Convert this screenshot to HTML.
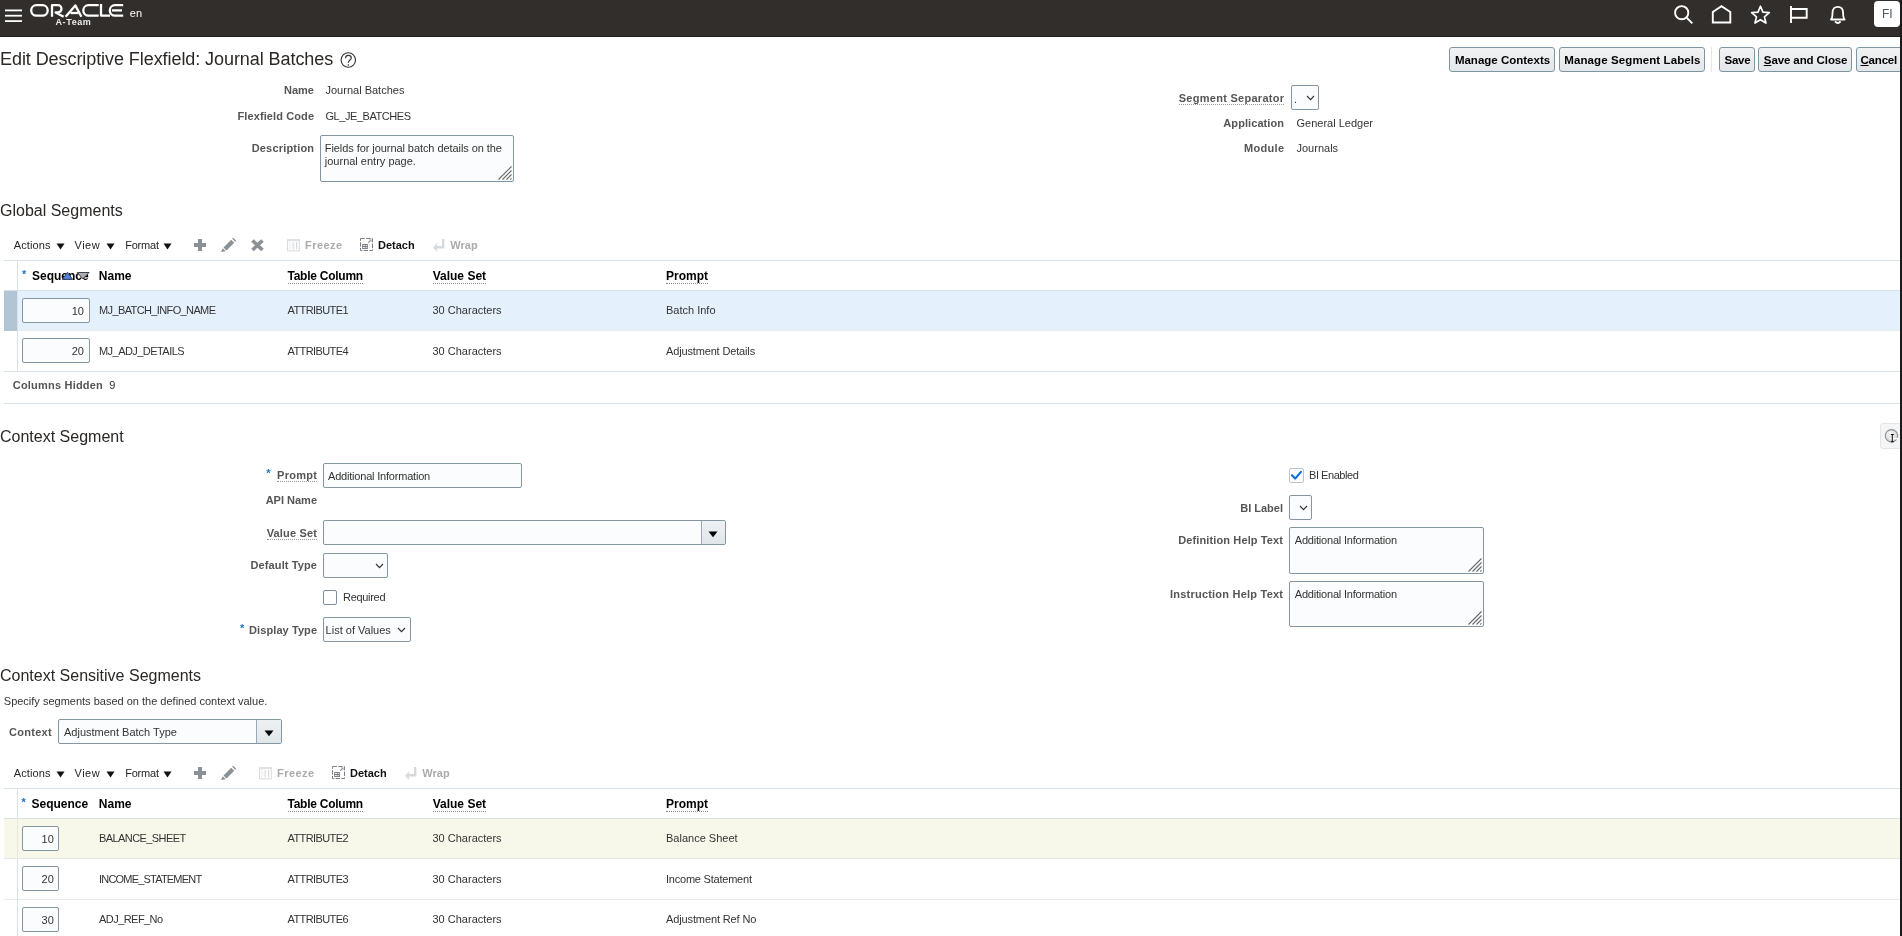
<!DOCTYPE html><html><head><meta charset="utf-8"><style>
html,body{margin:0;padding:0;}
body{width:1902px;height:936px;overflow:hidden;position:relative;background:#fff;font-family:'Liberation Sans', sans-serif;}
#pg{position:absolute;left:0;top:0;width:1902px;height:936px;will-change:transform;background:#fff;}
.t{position:absolute;white-space:nowrap;}
.r{position:absolute;box-sizing:border-box;}
.inp{position:absolute;box-sizing:border-box;border:1px solid #8396a2;background:#fbfcfd;border-radius:2px;}
.btn{position:absolute;box-sizing:border-box;border:1px solid #7e95a4;border-radius:3px;background:linear-gradient(#f1f2f4,#e3e7ea);}
.dot{border-bottom:1px dotted #999;}
</style></head><body><div id="pg">
<div class="r" style="left:0px;top:0px;width:1902px;height:36px;background:#322e2b;"></div>
<div class="r" style="left:0px;top:36px;width:1902px;height:1px;background:#231f1c;"></div>
<svg class="r" style="left:4px;top:8px;" width="20" height="16" viewBox="0 0 20 16"><rect x="1" y="1.5" width="17" height="1.8" fill="#fff"/><rect x="1" y="6.8" width="17" height="1.8" fill="#fff"/><rect x="1" y="12.2" width="17" height="1.8" fill="#fff"/></svg>
<svg class="r" style="left:28px;top:2px;" width="100" height="26" viewBox="0 0 100 26"><g fill="none" stroke="#fff" stroke-width="2.3" stroke-linejoin="round">
<rect x="3.2" y="3.2" width="16.5" height="10.4" rx="5.2"/>
<path d="M24,14.8 V3.2 H29.9 A3.6,3.6 0 0 1 29.9,10.4 H27.6 L35.6,14.8"/>
<path d="M37.6,14.8 L47.3,3.4 L53.4,14.8"/><path d="M42.5,11 H50.5"/>
<path d="M70.7,3.2 H60.5 A5.2,5.2 0 0 0 60.5,13.6 H70.7"/>
<path d="M73,2.1 V13.6 H82"/>
<path d="M95.2,3.2 H87 A5.2,5.2 0 0 0 87,13.6 H95.2"/><path d="M84,8.4 H94"/>
</g></svg>
<div class="t" style="left:55.5px;top:16.6px;font-size:9px;line-height:10px;font-weight:bold;letter-spacing:0.6px;color:#eee;">A-Team</div>
<div class="t" style="left:129.8px;top:5.7px;font-size:11px;line-height:14px;color:#fff;">en</div>
<svg class="r" style="left:1670px;top:2px;" width="28" height="26" viewBox="0 0 28 26"><g fill="none" stroke="#fff" stroke-width="1.9"><circle cx="11.7" cy="10.7" r="6.6"/><path d="M16.5,15.5 L22.3,21.3"/></g></svg>
<svg class="r" style="left:1708px;top:2px;" width="28" height="26" viewBox="0 0 28 26"><path d="M4.8,20.5 V10 L13.5,4.2 L22.3,10 V20.5 Z" fill="none" stroke="#fff" stroke-width="1.9"/></svg>
<svg class="r" style="left:1746px;top:2px;" width="28" height="26" viewBox="0 0 28 26"><path d="M14.45,4.25 L16.91,10.16 L23.29,10.68 L18.43,14.84 L19.92,21.07 L14.45,17.73 L8.98,21.07 L10.47,14.84 L5.61,10.68 L11.99,10.16 Z" fill="none" stroke="#fff" stroke-width="1.7" stroke-linejoin="round"/></svg>
<svg class="r" style="left:1786px;top:2px;" width="28" height="26" viewBox="0 0 28 26"><g fill="none" stroke="#fff" stroke-width="1.9"><path d="M5,4 V21"/><path d="M5,7 H20.7 V15.7 H5"/></g></svg>
<svg class="r" style="left:1825px;top:2px;" width="28" height="26" viewBox="0 0 28 26"><g fill="none" stroke="#fff" stroke-width="1.8"><path d="M6,17.5 C7.5,16 7.5,14 7.5,11 C7.5,6.5 10,4.8 12.8,4.8 C15.6,4.8 18.1,6.5 18.1,11 C18.1,14 18.1,16 19.6,17.5 Z" stroke-linejoin="round"/><path d="M10,19.4 Q12.8,22.6 15.6,19.4"/></g></svg>
<div class="r" style="left:1874px;top:1px;width:26px;height:26px;background:#fdfeff;border-radius:4px;"></div>
<div class="t" style="left:1874.3px;width:26px;text-align:center;top:6.5px;font-size:12px;line-height:14px;color:#555;">FI</div>
<div class="t" style="top:48.9px;font-size:18px;line-height:20px;color:#2b2724;letter-spacing:-0.07px;left:0.0px;">Edit Descriptive Flexfield: Journal Batches</div>
<svg class="r" style="left:339px;top:51px;" width="18" height="18" viewBox="0 0 18 18"><circle cx="9.3" cy="9" r="7.2" fill="none" stroke="#333" stroke-width="1.1"/><path d="M6.4,7.2 C6.6,5.3 7.9,4.4 9.4,4.4 C11.1,4.4 12.3,5.5 12.3,6.9 C12.3,8.8 9.3,9.3 9.3,11.8 M9.3,13.3 V14.8" fill="none" stroke="#333" stroke-width="1.15"/></svg>
<div class="btn" style="left:1449px;top:47px;width:106px;height:25px;"></div>
<div class="t" style="left:1454.9px;top:53px;font-size:11.5px;line-height:14px;font-weight:bold;color:#000;letter-spacing:0px">Manage Contexts</div>
<div class="btn" style="left:1559px;top:47px;width:146px;height:25px;"></div>
<div class="t" style="left:1564.3px;top:53px;font-size:11.5px;line-height:14px;font-weight:bold;color:#000;letter-spacing:0.1px">Manage Segment Labels</div>
<div class="r" style="left:1711px;top:47px;width:1px;height:25px;background:#dfe6ec;"></div>
<div class="btn" style="left:1719px;top:47px;width:36px;height:25px;"></div>
<div class="t" style="left:1724.6px;top:53px;font-size:11.5px;line-height:14px;font-weight:bold;color:#000;letter-spacing:-0.3px">Save</div>
<div class="btn" style="left:1758px;top:47px;width:94px;height:25px;"></div>
<div class="t" style="left:1763.8px;top:53px;font-size:11.5px;line-height:14px;font-weight:bold;color:#000;letter-spacing:-0.1px"><u style="text-decoration-thickness:1px;text-underline-offset:1px">S</u>ave and Close</div>
<div class="btn" style="left:1856px;top:47px;width:50px;height:25px;"></div>
<div class="t" style="left:1860.5px;top:53px;font-size:11.5px;line-height:14px;font-weight:bold;color:#000;letter-spacing:-0.2px"><u style="text-decoration-thickness:1px;text-underline-offset:1px">C</u>ancel</div>
<div class="t" style="top:83.0px;font-size:11px;line-height:14px;color:#555555;font-weight:bold;right:1588.0px;text-align:right;">Name</div>
<div class="t" style="top:83.0px;font-size:11px;line-height:14px;color:#333;left:325.5px;">Journal Batches</div>
<div class="t" style="top:109.0px;font-size:11px;line-height:14px;color:#555555;font-weight:bold;letter-spacing:0.1px;right:1587.9px;text-align:right;">Flexfield Code</div>
<div class="t" style="top:109.0px;font-size:11px;line-height:14px;color:#333;letter-spacing:-0.45px;left:325.5px;">GL_JE_BATCHES</div>
<div class="t" style="top:141.2px;font-size:11px;line-height:14px;color:#555555;font-weight:bold;letter-spacing:0.18px;right:1587.8px;text-align:right;">Description</div>
<div class="inp" style="left:320px;top:135px;width:194px;height:47px;"></div>
<div class="t" style="top:141.2px;font-size:11px;line-height:14px;color:#333;letter-spacing:-0.07px;left:324.8px;">Fields for journal batch details on the</div>
<div class="t" style="top:153.7px;font-size:11px;line-height:14px;color:#333;left:324.8px;">journal entry page.</div>
<svg class="r" style="left:497px;top:165px;" width="16" height="16" viewBox="0 0 16 16"><g stroke="#6a6a6a" stroke-width="1.1"><path d="M1.5,14.5 L14.5,1.5"/><path d="M5.5,14.5 L14.5,5.5"/><path d="M9.5,14.5 L14.5,9.5"/><path d="M13.3,14.5 L14.5,13.3"/></g></svg>
<div class="t" style="top:91.0px;font-size:11px;line-height:14px;color:#555555;font-weight:bold;letter-spacing:0.28px;right:617.7px;text-align:right;"><span class="dot">Segment Separator</span></div>
<div class="inp" style="left:1291px;top:85px;width:28px;height:25px;"></div>
<svg class="r" style="left:1305.5px;top:94.5px;" width="9" height="6" viewBox="0 0 9 6"><path d="M1,1 L4.5,4.6 L8,1" fill="none" stroke="#333" stroke-width="1.15"/></svg>
<div class="t" style="top:92.0px;font-size:11px;line-height:14px;color:#333;left:1294.0px;">.</div>
<div class="t" style="top:115.8px;font-size:11px;line-height:14px;color:#555555;font-weight:bold;letter-spacing:0.08px;right:617.9px;text-align:right;">Application</div>
<div class="t" style="top:115.8px;font-size:11px;line-height:14px;color:#333;left:1296.5px;">General Ledger</div>
<div class="t" style="top:140.7px;font-size:11px;line-height:14px;color:#555555;font-weight:bold;letter-spacing:0.3px;right:617.7px;text-align:right;">Module</div>
<div class="t" style="top:140.7px;font-size:11px;line-height:14px;color:#333;left:1296.5px;">Journals</div>
<div class="t" style="top:200.6px;font-size:16px;line-height:20px;color:#2b2724;left:0.0px;">Global Segments</div>
<div class="t" style="top:238.2px;font-size:11px;line-height:14px;color:#252525;letter-spacing:0.12px;left:13.7px;">Actions</div>
<svg class="r" style="left:55.5px;top:242.5px;" width="9" height="7" viewBox="0 0 9 7"><path d="M0.5,0.5 H8.5 L4.5,6.5 Z" fill="#111"/></svg>
<div class="t" style="top:238.2px;font-size:11px;line-height:14px;color:#252525;letter-spacing:0.45px;left:74.6px;">View</div>
<svg class="r" style="left:106.2px;top:242.5px;" width="9" height="7" viewBox="0 0 9 7"><path d="M0.5,0.5 H8.5 L4.5,6.5 Z" fill="#111"/></svg>
<div class="t" style="top:238.2px;font-size:11px;line-height:14px;color:#252525;letter-spacing:-0.2px;left:125.2px;">Format</div>
<svg class="r" style="left:163.2px;top:242.5px;" width="9" height="7" viewBox="0 0 9 7"><path d="M0.5,0.5 H8.5 L4.5,6.5 Z" fill="#111"/></svg>
<svg class="r" style="left:193px;top:238.0px;" width="14" height="14" viewBox="0 0 14 14"><path d="M5,1 H9 V5 H13 V9 H9 V13 H5 V9 H1 V5 H5 Z" fill="#8a9096"/></svg>
<svg class="r" style="left:220px;top:237.0px;" width="17" height="16" viewBox="0 0 17 16"><g fill="#8a9096"><path d="M3.5,10.5 L11.2,2.8 L14.2,5.8 L6.5,13.5 Z"/><path d="M12.2,1.8 L13.2,0.8 L16.2,3.8 L15.2,4.8 Z"/><path d="M2.8,11.2 L5.8,14.2 L1,15 Z"/></g></svg>
<svg class="r" style="left:250px;top:238.0px;" width="15" height="14" viewBox="0 0 15 14"><path d="M2.5,2.5 L12.5,12 M12.5,2.5 L2.5,12" stroke="#8a9096" stroke-width="3.6"/></svg>
<svg class="r" style="left:286px;top:238.0px;" width="15" height="14" viewBox="0 0 15 14"><rect x="1.5" y="1.5" width="11.8" height="11.3" fill="none" stroke="#d8dbde" stroke-width="1"/><rect x="1" y="1" width="12.8" height="2.2" fill="#dfe2e5"/><g fill="#dcdfe2"><rect x="3" y="4.3" width="1" height="1"/><rect x="4.2" y="5.8" width="1" height="1"/><rect x="3" y="7.3" width="1" height="1"/><rect x="4.2" y="8.8" width="1" height="1"/><rect x="3" y="10.3" width="1" height="1"/></g><rect x="6.3" y="4.2" width="1.9" height="7" fill="#e5e7e9"/><rect x="10.1" y="4.2" width="1.1" height="7" fill="#d3d6d9"/></svg>
<div class="t" style="top:238.2px;font-size:11px;line-height:14px;color:#ababab;font-weight:bold;letter-spacing:0.45px;left:305.0px;">Freeze</div>
<svg class="r" style="left:359px;top:237.0px;" width="16" height="16" viewBox="0 0 16 16"><rect x="1.5" y="1.5" width="12" height="12" fill="none" stroke="#7b8086" stroke-width="1" stroke-dasharray="4.4,1.3"/><rect x="3" y="7" width="6" height="5" rx="0.8" fill="#7b8086"/><g fill="#fff"><rect x="3.7" y="8.1" width="2.7" height="0.8"/><rect x="7.1" y="8.1" width="1.2" height="0.8"/><rect x="3.7" y="10" width="2.7" height="0.8"/><rect x="7.1" y="10" width="1.2" height="0.8"/></g><path d="M9.3,5.7 L11.2,3.8" stroke="#8a8f95" stroke-width="1.2"/><path d="M10,2.6 L12.5,2.6 L12.5,5.1 Z" fill="#8a8f95"/></svg>
<div class="t" style="top:238.2px;font-size:11px;line-height:14px;color:#111;font-weight:bold;left:378.0px;">Detach</div>
<svg class="r" style="left:432px;top:238.0px;" width="14" height="14" viewBox="0 0 14 14"><path d="M11.2,1 V9.2 H4" fill="none" stroke="#d6d9dc" stroke-width="2.4"/><path d="M0.8,9.8 L5.2,5 V14 Z" fill="#dadde0"/></svg>
<div class="t" style="top:238.2px;font-size:11px;line-height:14px;color:#ababab;font-weight:bold;left:450.3px;">Wrap</div>
<div class="r" style="left:4px;top:260px;width:1896px;height:1px;background:#d9e1e8;"></div>
<div class="r" style="left:17px;top:261px;width:1px;height:110px;background:#d9e1e8;"></div>
<div class="t" style="top:266.5px;font-size:11px;line-height:14px;color:#1c74c8;font-weight:bold;left:22.0px;">*</div>
<div class="t" style="top:268.6px;font-size:12px;line-height:14px;color:#000;font-weight:bold;left:32.0px;">Sequence</div>
<svg class="r" style="left:60px;top:270px;" width="32" height="12" viewBox="0 0 32 12"><path d="M2.4,9.4 L7.4,2.3 L12.7,9.4 Z" fill="#4f84d8" stroke="#2a3a55" stroke-width="0.9"/><path d="M17.3,2.5 H29.1 L22.8,8.9 Z" fill="#aab0b5" stroke="#333" stroke-width="0.9"/></svg>
<div class="t" style="top:269.0px;font-size:12px;line-height:14px;color:#000;font-weight:bold;left:98.8px;">Name</div>
<div class="t" style="top:269.0px;font-size:12px;line-height:14px;color:#000;font-weight:bold;letter-spacing:-0.25px;left:287.5px;"><span class="dot" style="border-bottom-color:#8a8a8a">Table Column</span></div>
<div class="t" style="top:269.0px;font-size:12px;line-height:14px;color:#000;font-weight:bold;left:432.7px;"><span class="dot" style="border-bottom-color:#8a8a8a">Value Set</span></div>
<div class="t" style="top:269.0px;font-size:12px;line-height:14px;color:#000;font-weight:bold;left:666.0px;"><span class="dot" style="border-bottom-color:#8a8a8a">Prompt</span></div>
<div class="r" style="left:4px;top:290px;width:1896px;height:1px;background:#d9e1e8;"></div>
<div class="r" style="left:18px;top:291px;width:1882px;height:40px;background:#e4f0fc;"></div>
<div class="r" style="left:4px;top:291px;width:13px;height:40px;background:#b2c5d5;"></div>
<div class="r" style="left:18px;top:330px;width:1882px;height:1px;background:#eaecee;"></div>
<div class="inp" style="left:22px;top:298px;width:68px;height:25px;"></div>
<div class="t" style="top:304.0px;font-size:11px;line-height:14px;color:#333;right:1818.0px;text-align:right;">10</div>
<div class="t" style="top:303.2px;font-size:11px;line-height:14px;color:#333;letter-spacing:-0.62px;left:99.0px;">MJ_BATCH_INFO_NAME</div>
<div class="t" style="top:303.2px;font-size:11px;line-height:14px;color:#333;letter-spacing:-0.6px;left:287.5px;">ATTRIBUTE1</div>
<div class="t" style="top:303.2px;font-size:11px;line-height:14px;color:#333;left:432.5px;">30 Characters</div>
<div class="t" style="top:303.2px;font-size:11px;line-height:14px;color:#333;left:666.0px;">Batch Info</div>
<div class="inp" style="left:22px;top:338px;width:68px;height:25px;"></div>
<div class="t" style="top:344.0px;font-size:11px;line-height:14px;color:#333;right:1818.0px;text-align:right;">20</div>
<div class="t" style="top:343.5px;font-size:11px;line-height:14px;color:#333;letter-spacing:-0.55px;left:99.0px;">MJ_ADJ_DETAILS</div>
<div class="t" style="top:343.5px;font-size:11px;line-height:14px;color:#333;letter-spacing:-0.6px;left:287.5px;">ATTRIBUTE4</div>
<div class="t" style="top:343.5px;font-size:11px;line-height:14px;color:#333;left:432.5px;">30 Characters</div>
<div class="t" style="top:343.5px;font-size:11px;line-height:14px;color:#333;letter-spacing:-0.15px;left:666.0px;">Adjustment Details</div>
<div class="r" style="left:4px;top:371px;width:1896px;height:1px;background:#d9e1e8;"></div>
<div class="t" style="top:378.2px;font-size:11px;line-height:14px;color:#555555;font-weight:bold;letter-spacing:0.2px;left:12.8px;">Columns Hidden</div>
<div class="t" style="top:378.2px;font-size:11px;line-height:14px;color:#333;left:109.3px;">9</div>
<div class="r" style="left:4px;top:403px;width:1896px;height:1px;background:#d9e1e8;"></div>
<div class="t" style="top:426.7px;font-size:16px;line-height:20px;color:#2b2724;left:0.0px;">Context Segment</div>
<div class="r" style="left:1880px;top:423px;width:22px;height:26px;background:#f3f5f7;border:1px solid #dfe5ea;border-radius:3px;"></div>
<svg class="r" style="left:1884px;top:428px;" width="16" height="16" viewBox="0 0 16 16"><defs><radialGradient id="cg" cx="0.4" cy="0.35" r="0.7"><stop offset="0" stop-color="#fafafa"/><stop offset="1" stop-color="#cfcfcf"/></radialGradient></defs><circle cx="7.5" cy="7.8" r="6.2" fill="url(#cg)" stroke="#8f8f8f" stroke-width="1.1"/><path d="M5.5,10.6 H14" stroke="#fff" stroke-width="1.6"/><path d="M8.3,6.5 V13.8 M6.8,6.5 H9.8 M6.8,13.8 H9.8" stroke="#111" stroke-width="1"/></svg>
<div class="t" style="top:465.5px;font-size:11px;line-height:14px;color:#1c74c8;font-weight:bold;left:266.2px;">*</div>
<div class="t" style="top:468.1px;font-size:11px;line-height:14px;color:#555555;font-weight:bold;letter-spacing:0.3px;right:1584.7px;text-align:right;"><span class="dot">Prompt</span></div>
<div class="inp" style="left:323px;top:463px;width:199px;height:25px;"></div>
<div class="t" style="top:469.3px;font-size:11px;line-height:14px;color:#333;letter-spacing:-0.2px;left:328.0px;">Additional Information</div>
<div class="t" style="top:492.9px;font-size:11px;line-height:14px;color:#555555;font-weight:bold;right:1585.0px;text-align:right;">API Name</div>
<div class="t" style="top:525.8px;font-size:11px;line-height:14px;color:#555555;font-weight:bold;letter-spacing:0.18px;right:1584.8px;text-align:right;"><span class="dot">Value Set</span></div>
<div class="inp" style="left:323px;top:520px;width:403px;height:25px;"></div>
<div class="r" style="left:701px;top:521px;width:24px;height:23px;background:linear-gradient(#eef1f3,#e1e6ea);border-left:1px solid #9aaabb;"></div>
<svg class="r" style="left:708px;top:531px;" width="10" height="7" viewBox="0 0 10 7"><path d="M0.5,0.5 H9.5 L5,6.2 Z" fill="#000"/></svg>
<div class="t" style="top:558.4px;font-size:11px;line-height:14px;color:#555555;font-weight:bold;letter-spacing:0.12px;right:1584.9px;text-align:right;">Default Type</div>
<div class="inp" style="left:323px;top:553px;width:65px;height:25px;"></div>
<svg class="r" style="left:374.5px;top:562.5px;" width="9" height="6" viewBox="0 0 9 6"><path d="M1,1 L4.5,4.6 L8,1" fill="none" stroke="#333" stroke-width="1.15"/></svg>
<div class="r" style="left:323px;top:590px;width:14px;height:15px;border:1px solid #7d8fa1;border-radius:2px;background:#fff;"></div>
<div class="t" style="top:589.8px;font-size:11px;line-height:14px;color:#333;letter-spacing:-0.3px;left:343.0px;">Required</div>
<div class="t" style="top:620.5px;font-size:11px;line-height:14px;color:#1c74c8;font-weight:bold;left:240.0px;">*</div>
<div class="t" style="top:623.3px;font-size:11px;line-height:14px;color:#555555;font-weight:bold;letter-spacing:0.08px;right:1584.9px;text-align:right;">Display Type</div>
<div class="inp" style="left:323px;top:617px;width:88px;height:25px;"></div>
<svg class="r" style="left:397.1px;top:626.5px;" width="9" height="6" viewBox="0 0 9 6"><path d="M1,1 L4.5,4.6 L8,1" fill="none" stroke="#333" stroke-width="1.15"/></svg>
<div class="t" style="top:623.3px;font-size:11px;line-height:14px;color:#333;left:325.6px;">List of Values</div>
<div class="r" style="left:1289px;top:468px;width:15px;height:15px;border:1px solid #b9c5d0;border-radius:2px;background:#fff;"></div>
<svg class="r" style="left:1289px;top:468px;" width="15" height="15" viewBox="0 0 15 15"><path d="M3,7.2 L6.2,10.6 L12,3.9" fill="none" stroke="#0a6fd6" stroke-width="2.1" stroke-linecap="round" stroke-linejoin="round"/></svg>
<div class="t" style="top:468.2px;font-size:11px;line-height:14px;color:#333;letter-spacing:-0.45px;left:1309.0px;">BI Enabled</div>
<div class="t" style="top:500.9px;font-size:11px;line-height:14px;color:#555555;font-weight:bold;right:619.0px;text-align:right;">BI Label</div>
<div class="inp" style="left:1289px;top:495px;width:23px;height:25px;"></div>
<svg class="r" style="left:1298.5px;top:504.5px;" width="9" height="6" viewBox="0 0 9 6"><path d="M1,1 L4.5,4.6 L8,1" fill="none" stroke="#333" stroke-width="1.15"/></svg>
<div class="t" style="top:533.0px;font-size:11px;line-height:14px;color:#555555;font-weight:bold;letter-spacing:0.12px;right:618.9px;text-align:right;">Definition Help Text</div>
<div class="inp" style="left:1289px;top:527px;width:195px;height:47px;"></div>
<div class="t" style="top:533.0px;font-size:11px;line-height:14px;color:#333;letter-spacing:-0.2px;left:1294.8px;">Additional Information</div>
<svg class="r" style="left:1467px;top:557px;" width="16" height="16" viewBox="0 0 16 16"><g stroke="#6a6a6a" stroke-width="1.1"><path d="M1.5,14.5 L14.5,1.5"/><path d="M5.5,14.5 L14.5,5.5"/><path d="M9.5,14.5 L14.5,9.5"/><path d="M13.3,14.5 L14.5,13.3"/></g></svg>
<div class="t" style="top:586.9px;font-size:11px;line-height:14px;color:#555555;font-weight:bold;letter-spacing:0.22px;right:618.8px;text-align:right;">Instruction Help Text</div>
<div class="inp" style="left:1289px;top:581px;width:195px;height:46px;"></div>
<div class="t" style="top:586.9px;font-size:11px;line-height:14px;color:#333;letter-spacing:-0.2px;left:1294.8px;">Additional Information</div>
<svg class="r" style="left:1467px;top:610px;" width="16" height="16" viewBox="0 0 16 16"><g stroke="#6a6a6a" stroke-width="1.1"><path d="M1.5,14.5 L14.5,1.5"/><path d="M5.5,14.5 L14.5,5.5"/><path d="M9.5,14.5 L14.5,9.5"/><path d="M13.3,14.5 L14.5,13.3"/></g></svg>
<div class="t" style="top:665.8px;font-size:16px;line-height:20px;color:#2b2724;left:0.0px;">Context Sensitive Segments</div>
<div class="t" style="top:694.0px;font-size:11px;line-height:14px;color:#333;left:3.8px;">Specify segments based on the defined context value.</div>
<div class="t" style="top:725.0px;font-size:11px;line-height:14px;color:#555555;font-weight:bold;letter-spacing:0.3px;right:1850.0px;text-align:right;">Context</div>
<div class="inp" style="left:58px;top:719px;width:224px;height:25px;"></div>
<div class="r" style="left:256px;top:720px;width:25px;height:23px;background:linear-gradient(#eef1f3,#e1e6ea);border-left:1px solid #9aaabb;"></div>
<svg class="r" style="left:264px;top:730px;" width="10" height="7" viewBox="0 0 10 7"><path d="M0.5,0.5 H9.5 L5,6.2 Z" fill="#000"/></svg>
<div class="t" style="top:725.2px;font-size:11px;line-height:14px;color:#333;left:64.0px;">Adjustment Batch Type</div>
<div class="t" style="top:766.3px;font-size:11px;line-height:14px;color:#252525;letter-spacing:0.12px;left:13.7px;">Actions</div>
<svg class="r" style="left:55.5px;top:770.5999999999999px;" width="9" height="7" viewBox="0 0 9 7"><path d="M0.5,0.5 H8.5 L4.5,6.5 Z" fill="#111"/></svg>
<div class="t" style="top:766.3px;font-size:11px;line-height:14px;color:#252525;letter-spacing:0.45px;left:74.6px;">View</div>
<svg class="r" style="left:106.2px;top:770.5999999999999px;" width="9" height="7" viewBox="0 0 9 7"><path d="M0.5,0.5 H8.5 L4.5,6.5 Z" fill="#111"/></svg>
<div class="t" style="top:766.3px;font-size:11px;line-height:14px;color:#252525;letter-spacing:-0.2px;left:125.2px;">Format</div>
<svg class="r" style="left:163.2px;top:770.5999999999999px;" width="9" height="7" viewBox="0 0 9 7"><path d="M0.5,0.5 H8.5 L4.5,6.5 Z" fill="#111"/></svg>
<svg class="r" style="left:193px;top:766.0999999999999px;" width="14" height="14" viewBox="0 0 14 14"><path d="M5,1 H9 V5 H13 V9 H9 V13 H5 V9 H1 V5 H5 Z" fill="#8a9096"/></svg>
<svg class="r" style="left:220px;top:765.0999999999999px;" width="17" height="16" viewBox="0 0 17 16"><g fill="#8a9096"><path d="M3.5,10.5 L11.2,2.8 L14.2,5.8 L6.5,13.5 Z"/><path d="M12.2,1.8 L13.2,0.8 L16.2,3.8 L15.2,4.8 Z"/><path d="M2.8,11.2 L5.8,14.2 L1,15 Z"/></g></svg>
<svg class="r" style="left:258px;top:766.0999999999999px;" width="15" height="14" viewBox="0 0 15 14"><rect x="1.5" y="1.5" width="11.8" height="11.3" fill="none" stroke="#d8dbde" stroke-width="1"/><rect x="1" y="1" width="12.8" height="2.2" fill="#dfe2e5"/><g fill="#dcdfe2"><rect x="3" y="4.3" width="1" height="1"/><rect x="4.2" y="5.8" width="1" height="1"/><rect x="3" y="7.3" width="1" height="1"/><rect x="4.2" y="8.8" width="1" height="1"/><rect x="3" y="10.3" width="1" height="1"/></g><rect x="6.3" y="4.2" width="1.9" height="7" fill="#e5e7e9"/><rect x="10.1" y="4.2" width="1.1" height="7" fill="#d3d6d9"/></svg>
<div class="t" style="top:766.3px;font-size:11px;line-height:14px;color:#ababab;font-weight:bold;letter-spacing:0.45px;left:277.0px;">Freeze</div>
<svg class="r" style="left:331px;top:765.0999999999999px;" width="16" height="16" viewBox="0 0 16 16"><rect x="1.5" y="1.5" width="12" height="12" fill="none" stroke="#7b8086" stroke-width="1" stroke-dasharray="4.4,1.3"/><rect x="3" y="7" width="6" height="5" rx="0.8" fill="#7b8086"/><g fill="#fff"><rect x="3.7" y="8.1" width="2.7" height="0.8"/><rect x="7.1" y="8.1" width="1.2" height="0.8"/><rect x="3.7" y="10" width="2.7" height="0.8"/><rect x="7.1" y="10" width="1.2" height="0.8"/></g><path d="M9.3,5.7 L11.2,3.8" stroke="#8a8f95" stroke-width="1.2"/><path d="M10,2.6 L12.5,2.6 L12.5,5.1 Z" fill="#8a8f95"/></svg>
<div class="t" style="top:766.3px;font-size:11px;line-height:14px;color:#111;font-weight:bold;left:350.0px;">Detach</div>
<svg class="r" style="left:404px;top:766.0999999999999px;" width="14" height="14" viewBox="0 0 14 14"><path d="M11.2,1 V9.2 H4" fill="none" stroke="#d6d9dc" stroke-width="2.4"/><path d="M0.8,9.8 L5.2,5 V14 Z" fill="#dadde0"/></svg>
<div class="t" style="top:766.3px;font-size:11px;line-height:14px;color:#ababab;font-weight:bold;left:422.3px;">Wrap</div>
<div class="r" style="left:4px;top:788px;width:1896px;height:1px;background:#d9e1e8;"></div>
<div class="r" style="left:17px;top:789px;width:1px;height:147px;background:#d9e1e8;"></div>
<div class="t" style="top:794.5px;font-size:11px;line-height:14px;color:#1c74c8;font-weight:bold;left:21.5px;">*</div>
<div class="t" style="top:796.6px;font-size:12px;line-height:14px;color:#000;font-weight:bold;left:31.5px;">Sequence</div>
<div class="t" style="top:796.6px;font-size:12px;line-height:14px;color:#000;font-weight:bold;left:98.8px;">Name</div>
<div class="t" style="top:796.6px;font-size:12px;line-height:14px;color:#000;font-weight:bold;letter-spacing:-0.25px;left:287.5px;"><span class="dot" style="border-bottom-color:#8a8a8a">Table Column</span></div>
<div class="t" style="top:796.6px;font-size:12px;line-height:14px;color:#000;font-weight:bold;left:432.7px;"><span class="dot" style="border-bottom-color:#8a8a8a">Value Set</span></div>
<div class="t" style="top:796.6px;font-size:12px;line-height:14px;color:#000;font-weight:bold;left:666.0px;"><span class="dot" style="border-bottom-color:#8a8a8a">Prompt</span></div>
<div class="r" style="left:4px;top:818px;width:1896px;height:1px;background:#d9e1e8;"></div>
<div class="r" style="left:4px;top:819px;width:1896px;height:39px;background:#f7f8e9;"></div>
<div class="r" style="left:17px;top:819px;width:1px;height:39px;background:#e6e9dc;"></div>
<div class="inp" style="left:22px;top:826px;width:37px;height:25px;"></div>
<div class="t" style="top:832.0px;font-size:11px;line-height:14px;color:#333;right:1848.2px;text-align:right;">10</div>
<div class="t" style="top:830.9px;font-size:11px;line-height:14px;color:#333;letter-spacing:-0.58px;left:99.0px;">BALANCE_SHEET</div>
<div class="t" style="top:830.9px;font-size:11px;line-height:14px;color:#333;letter-spacing:-0.6px;left:287.5px;">ATTRIBUTE2</div>
<div class="t" style="top:830.9px;font-size:11px;line-height:14px;color:#333;left:432.5px;">30 Characters</div>
<div class="t" style="top:830.9px;font-size:11px;line-height:14px;color:#333;left:666.0px;">Balance Sheet</div>
<div class="r" style="left:4px;top:858px;width:1896px;height:1px;background:#e5e7e9;"></div>
<div class="inp" style="left:22px;top:866px;width:37px;height:25px;"></div>
<div class="t" style="top:872.0px;font-size:11px;line-height:14px;color:#333;right:1848.2px;text-align:right;">20</div>
<div class="t" style="top:871.6px;font-size:11px;line-height:14px;color:#333;letter-spacing:-0.8px;left:99.0px;">INCOME_STATEMENT</div>
<div class="t" style="top:871.6px;font-size:11px;line-height:14px;color:#333;letter-spacing:-0.6px;left:287.5px;">ATTRIBUTE3</div>
<div class="t" style="top:871.6px;font-size:11px;line-height:14px;color:#333;left:432.5px;">30 Characters</div>
<div class="t" style="top:871.6px;font-size:11px;line-height:14px;color:#333;letter-spacing:-0.22px;left:666.0px;">Income Statement</div>
<div class="r" style="left:4px;top:899px;width:1896px;height:1px;background:#e5e7e9;"></div>
<div class="inp" style="left:22px;top:907px;width:37px;height:25px;"></div>
<div class="t" style="top:913.0px;font-size:11px;line-height:14px;color:#333;right:1848.2px;text-align:right;">30</div>
<div class="t" style="top:912.0px;font-size:11px;line-height:14px;color:#333;letter-spacing:-0.55px;left:99.0px;">ADJ_REF_No</div>
<div class="t" style="top:912.0px;font-size:11px;line-height:14px;color:#333;letter-spacing:-0.6px;left:287.5px;">ATTRIBUTE6</div>
<div class="t" style="top:912.0px;font-size:11px;line-height:14px;color:#333;left:432.5px;">30 Characters</div>
<div class="t" style="top:912.0px;font-size:11px;line-height:14px;color:#333;letter-spacing:-0.12px;left:666.0px;">Adjustment Ref No</div>
<div class="r" style="left:1900px;top:0px;width:2px;height:936px;background:#1b1b1b;"></div>
</div></body></html>
